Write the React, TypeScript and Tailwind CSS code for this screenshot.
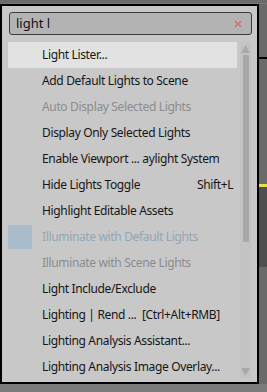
import { X } from "lucide-react";

type Item = { label: string; shortcut?: string; state?: "off" | "blue"; icon?: boolean; active?: boolean };

const items: Item[] = [
  { label: "Light Lister...", active: true },
  { label: "Add Default Lights to Scene" },
  { label: "Auto Display Selected Lights", state: "off" },
  { label: "Display Only Selected Lights" },
  { label: "Enable Viewport ... aylight System" },
  { label: "Hide Lights Toggle", shortcut: "Shift+L" },
  { label: "Highlight Editable Assets" },
  { label: "Illuminate with Default Lights", state: "blue", icon: true },
  { label: "Illuminate with Scene Lights", state: "off" },
  { label: "Light Include/Exclude" },
  { label: "Lighting | Rend ...  [Ctrl+Alt+RMB]" },
  { label: "Lighting Analysis Assistant..." },
  { label: "Lighting Analysis Image Overlay..." },
];

const Row = ({ item }: { item: Item }) => {
  const color =
    item.state === "off" ? "text-[#8c8c8c]" : item.state === "blue" ? "text-[#93a6b6]" : "text-[#161616]";
  return (
    <div className={`flex h-[26px] items-center ${item.active ? "bg-[#e2e2e2]" : ""}`}>
      <div className="w-[34px] h-full flex items-center">
        {item.icon && <div className="w-[24px] h-[24px] bg-[#a9bccb]" />}
      </div>
      <span className={`flex-1 whitespace-pre ${color}`}>{item.label}</span>
      {item.shortcut && <span className="pr-[4px] text-[#161616]">{item.shortcut}</span>}
    </div>
  );
};

export default function App() {
  return (
    <div
      className="w-[267px] h-[392px] bg-[#5d5d5d] overflow-hidden flex flex-col"
      style={{ fontFamily: '"Noto Sans", "Open Sans", sans-serif' }}
    >
      <div className="h-[4px] bg-[#6b6b6b] border-b border-[#777]" />
      <div className="flex">
        <div className="w-[259px] h-[380px] border-2 border-black bg-[#c8c8c8] flex flex-col px-[6px] pt-[6px]">
          <div className="h-[23px] ml-[1px] mr-[-1px] rounded-[3px] border border-[#3c3c3c] bg-[#b3b3b3] flex items-center pl-[6px] pr-[8px]">
            <span className="flex-1 text-[13px] text-[#111]">light l</span>
            <X size={10} strokeWidth={3.5} className="text-[#e06a6a]" />
          </div>
          <div className="flex mt-[7px] gap-[3px] text-[12px] tracking-[-0.35px]">
            <div className="w-[234px] flex flex-col">
              {items.map((it) => (
                <Row key={it.label} item={it} />
              ))}
            </div>
            <div className="w-[11px] h-[336px] bg-[#c3c3c3] flex flex-col items-center justify-between pt-[3px] pb-[2px]">
              <svg width="9" height="8" viewBox="0 0 9 8">
                <path d="M4.5 0 L9 8 L0 8 Z" fill="#a9a9a9" />
              </svg>
              <div className="w-[6px] h-[187px] mt-[2px] bg-[#a7a7a7] rounded-[1px] self-center mb-auto" />
              <svg width="9" height="8" viewBox="0 0 9 8">
                <path d="M0 0 L9 0 L4.5 8 Z" fill="#a9a9a9" />
              </svg>
            </div>
          </div>
        </div>
        <div className="flex-1 relative bg-[#6a6a6a]">
          <div className="absolute left-0 right-0 top-[53px] h-[2px] bg-black" />
          <div className="absolute left-0 right-0 top-[180px] h-[3px] bg-[#e5e04a]" />
          <div className="absolute left-0 right-0 top-[183px] h-[80px] bg-[#4e4e4e]" />
        </div>
      </div>
      <div className="flex-1 bg-[#7b7b7b]" />
    </div>
  );
}
